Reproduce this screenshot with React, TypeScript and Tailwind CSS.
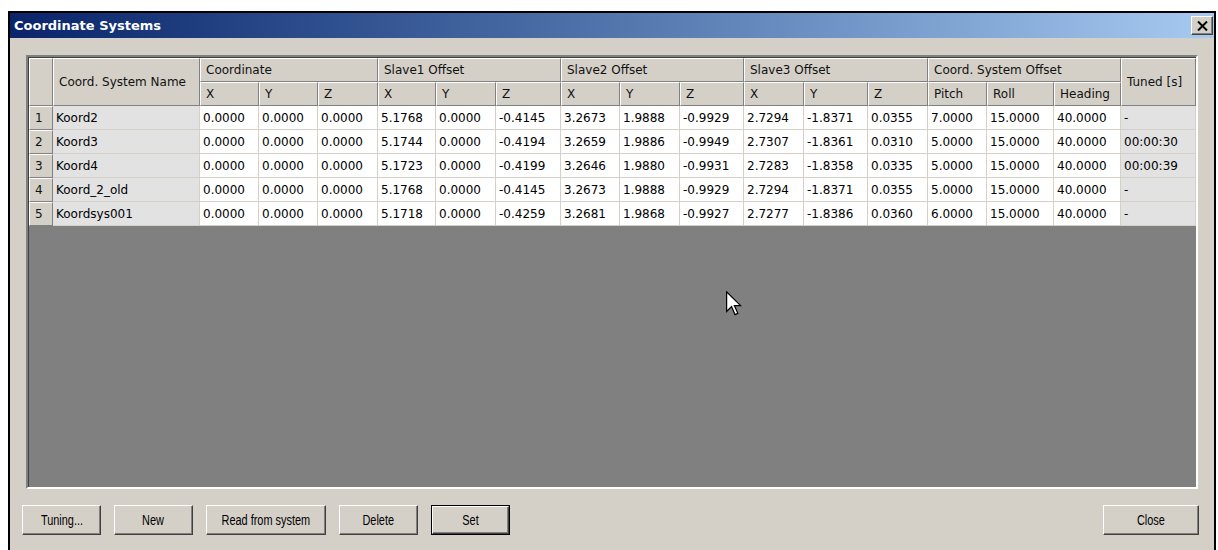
import React from "react";

type Row = {
  id: number;
  name: string;
  values: string[];
  tuned: string;
};

const rows: Row[] = [
  {
    id: 1,
    name: "Koord2",
    values: ["0.0000", "0.0000", "0.0000", "5.1768", "0.0000", "-0.4145", "3.2673", "1.9888", "-0.9929", "2.7294", "-1.8371", "0.0355", "7.0000", "15.0000", "40.0000"],
    tuned: "-",
  },
  {
    id: 2,
    name: "Koord3",
    values: ["0.0000", "0.0000", "0.0000", "5.1744", "0.0000", "-0.4194", "3.2659", "1.9886", "-0.9949", "2.7307", "-1.8361", "0.0310", "5.0000", "15.0000", "40.0000"],
    tuned: "00:00:30",
  },
  {
    id: 3,
    name: "Koord4",
    values: ["0.0000", "0.0000", "0.0000", "5.1723", "0.0000", "-0.4199", "3.2646", "1.9880", "-0.9931", "2.7283", "-1.8358", "0.0335", "5.0000", "15.0000", "40.0000"],
    tuned: "00:00:39",
  },
  {
    id: 4,
    name: "Koord_2_old",
    values: ["0.0000", "0.0000", "0.0000", "5.1768", "0.0000", "-0.4145", "3.2673", "1.9888", "-0.9929", "2.7294", "-1.8371", "0.0355", "5.0000", "15.0000", "40.0000"],
    tuned: "-",
  },
  {
    id: 5,
    name: "Koordsys001",
    values: ["0.0000", "0.0000", "0.0000", "5.1718", "0.0000", "-0.4259", "3.2681", "1.9868", "-0.9927", "2.7277", "-1.8386", "0.0360", "6.0000", "15.0000", "40.0000"],
    tuned: "-",
  },
];

const groups = ["Coordinate", "Slave1 Offset", "Slave2 Offset", "Slave3 Offset", "Coord. System Offset"];
const subHeaders = ["X", "Y", "Z", "X", "Y", "Z", "X", "Y", "Z", "X", "Y", "Z", "Pitch", "Roll", "Heading"];

// raised 3d header cell, classic look
const headCell =
  "flex items-center pl-[5px] font-normal text-[#111] bg-[#d4d0c8] border-t border-l border-t-white border-l-white border-r border-b border-r-[#808080] border-b-[#808080] whitespace-nowrap overflow-hidden";

const dataCell =
  "flex items-center pl-[3px] border-r border-b border-[#d4d0c8] whitespace-nowrap overflow-hidden";

function Button({ label, width, isDefault }: { label: string; width: string; isDefault?: boolean }) {
  return (
    <div className={`h-[30px] ${width} ${isDefault ? "border border-black" : ""}`}>
      <div className="h-full w-full bg-[#d4d0c8] border-t border-l border-white border-r border-b border-r-[#404040] border-b-[#404040] shadow-[inset_-1px_-1px_0_#808080] flex items-center justify-center overflow-hidden">
        <span className="inline-block whitespace-nowrap scale-x-[0.78] text-[14px] text-black font-['Liberation_Sans',sans-serif]">
          {label}
        </span>
      </div>
    </div>
  );
}

export default function App() {
  return (
    <div className="w-[1218px] h-[550px] bg-white pt-[11px] pl-[8px] pr-[2px] overflow-hidden font-['DejaVu_Sans',sans-serif] text-[12px] text-black">
      <div className="h-full border-2 border-b-0 border-black bg-[#d4d0c8] flex flex-col">
        {/* title bar */}
        <div className="h-[25px] flex items-center justify-between pl-[4px] pr-[1px] bg-gradient-to-r from-[#0a246a] to-[#a6caf0]">
          <span className="text-white font-bold text-[13px]">Coordinate Systems</span>
          <div className="w-[22px] h-[19px] bg-[#d4d0c8] border-t border-l border-white border-r border-b border-r-[#404040] border-b-[#404040] shadow-[inset_-1px_-1px_0_#808080] flex items-center justify-center">
            <svg width="11" height="10" viewBox="0 0 11 10">
              <path d="M1 0.5 L10 9.5 M10 0.5 L1 9.5" stroke="black" strokeWidth="2" />
            </svg>
          </div>
        </div>

        <div className="flex-1 flex flex-col pt-[17px] px-[16px]">
          {/* grid view */}
          <div className="h-[434px] border-2 border-t-[#808080] border-l-[#808080] border-r-white border-b-white">
            <div className="relative h-full bg-[#808080] border-t border-l border-[#404040]">
              <div className="grid grid-cols-[24px_147px_59px_59px_60px_58px_60px_65px_59px_60px_64px_60px_64px_60px_59px_67px_67px_75px] auto-rows-[24px] w-max">
                <div className={`${headCell} row-span-2`} />
                <div className={`${headCell} row-span-2`}>Coord. System Name</div>
                {groups.map((g) => (
                  <div key={g} className={`${headCell} col-span-3`}>
                    {g}
                  </div>
                ))}
                <div className={`${headCell} row-span-2`}>Tuned [s]</div>
                {subHeaders.map((h, i) => (
                  <div key={i} className={headCell}>
                    {h}
                  </div>
                ))}

                {rows.map((r) => (
                  <React.Fragment key={r.id}>
                    <div className={headCell}>{r.id}</div>
                    <div className={`${dataCell} bg-[#e2e2e2]`}>{r.name}</div>
                    {r.values.map((v, i) => (
                      <div key={i} className={`${dataCell} bg-white`}>
                        {v}
                      </div>
                    ))}
                    <div className={`${dataCell} bg-[#e2e2e2]`}>{r.tuned}</div>
                  </React.Fragment>
                ))}
              </div>

              {/* mouse pointer */}
              <svg className="absolute left-[697px] top-[233px]" width="16" height="25" viewBox="0 0 13 20">
                <polygon
                  points="0.5,0.5 0.5,16.5 4.5,12.5 7.3,19 9.6,18 6.8,11.7 11.8,11.7"
                  fill="white"
                  stroke="black"
                  strokeWidth="1"
                  strokeLinejoin="miter"
                />
              </svg>
            </div>
          </div>
        </div>

        {/* button row */}
        <div className="h-[61px] flex items-start pt-[16px] pl-[12px] pr-[15px]">
          <div className="flex gap-[13px]">
            <Button label="Tuning..." width="w-[79px]" />
            <Button label="New" width="w-[79px]" />
            <Button label="Read from system" width="w-[120px]" />
            <Button label="Delete" width="w-[79px]" />
            <Button label="Set" width="w-[79px]" isDefault />
          </div>
          <div className="ml-auto">
            <Button label="Close" width="w-[96px]" />
          </div>
        </div>
      </div>
    </div>
  );
}
